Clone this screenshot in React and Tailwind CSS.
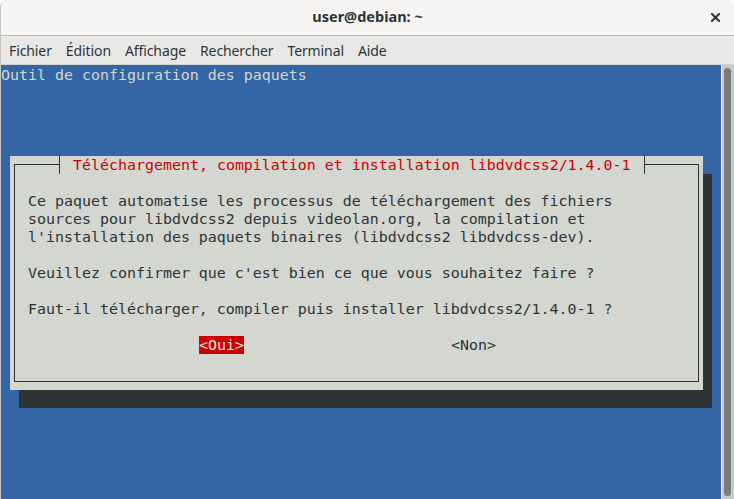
export default function App() {
  const mono = "font-['DejaVu_Sans_Mono',monospace] text-[14.95px] leading-[18px] whitespace-pre";
  const ui = "font-['Noto_Sans','Open_Sans',sans-serif]";
  const menu = ["Fichier", "Édition", "Affichage", "Rechercher", "Terminal", "Aide"];
  return (
    <div className="w-[734px] h-[499px] overflow-hidden bg-white">
      <div className="w-[734px] h-[499px] flex flex-col rounded-t-[7px] overflow-hidden border-l border-[#c6c4c0] bg-[#e8e8e7]">
        {/* title bar */}
        <div className="h-[36px] shrink-0 bg-[#f6f5f4] border-b border-[#bfbdb9] flex items-center relative">
          <div className={`${ui} flex-1 text-center text-[14.5px] font-bold text-[#2e3436] -mt-[1px]`}>user@debian: ~</div>
          <div className="absolute right-[14px] top-[13px] w-[9px] h-[9px]">
            <svg width="9" height="9" viewBox="0 0 9 9">
              <path d="M1 1L8 8M8 1L1 8" stroke="#2e3436" strokeWidth="2" strokeLinecap="square" />
            </svg>
          </div>
        </div>
        {/* menu bar */}
        <div className={`${ui} h-[29px] shrink-0 border-b border-[#d6d4d1] flex items-center text-[14px] text-[#2e3436]`}>
          {menu.map((m) => (
            <span key={m} className="px-[7px] first:pl-[8px] tracking-[-0.1px]">{m}</span>
          ))}
        </div>
        {/* terminal */}
        <div className="flex-1 flex min-h-0">
          <div className={`${mono} w-[720px] bg-[#3465a4] pt-[1px] text-[#d3d7cf]`}>
            <div className="h-[18px]">Outil de configuration des paquets</div>
            <div className="h-[72px]" />
            {/* dialog */}
            <div className="ml-[9px] w-[693px] h-[234px] bg-[#d3d7cf] shadow-[9px_18px_0_0_#2e3436] relative px-[4px] py-[8px] text-[#2e3436]">
              <div className="border border-[#2e3436] h-[218px] pl-[13px] pt-[27px]">
                <div className="h-[18px]">Ce paquet automatise les processus de téléchargement des fichiers</div>
                <div className="h-[18px]">sources pour libdvdcss2 depuis videolan.org, la compilation et</div>
                <div className="h-[18px]">l'installation des paquets binaires (libdvdcss2 libdvdcss-dev).</div>
                <div className="h-[18px]" />
                <div className="h-[18px]">Veuillez confirmer que c'est bien ce que vous souhaitez faire ?</div>
                <div className="h-[18px]" />
                <div className="h-[18px]">Faut-il télécharger, compiler puis installer libdvdcss2/1.4.0-1 ?</div>
                <div className="h-[18px]" />
                <div className="h-[18px] flex">
                  <span className="ml-[171px] bg-[#cc0000] text-[#e4e6e1]">&lt;Oui&gt;</span>
                  <span className="ml-[207px]">&lt;Non&gt;</span>
                </div>
              </div>
              <div className="absolute left-[49px] top-0 h-[18px] w-[586px] bg-[#d3d7cf] border-x border-[#2e3436] pl-[13px] text-[#cc0000]">
                Téléchargement, compilation et installation libdvdcss2/1.4.0-1
              </div>
            </div>
          </div>
          <div className="w-[1px] bg-[#f4f4f4]" />
          <div className="w-[12px] bg-[#c9c9c9] flex justify-center py-[3px]">
            <div className="w-[7px] ml-[-1px] rounded-full bg-[#7b7b7b]" />
          </div>
        </div>
      </div>
    </div>
  );
}
